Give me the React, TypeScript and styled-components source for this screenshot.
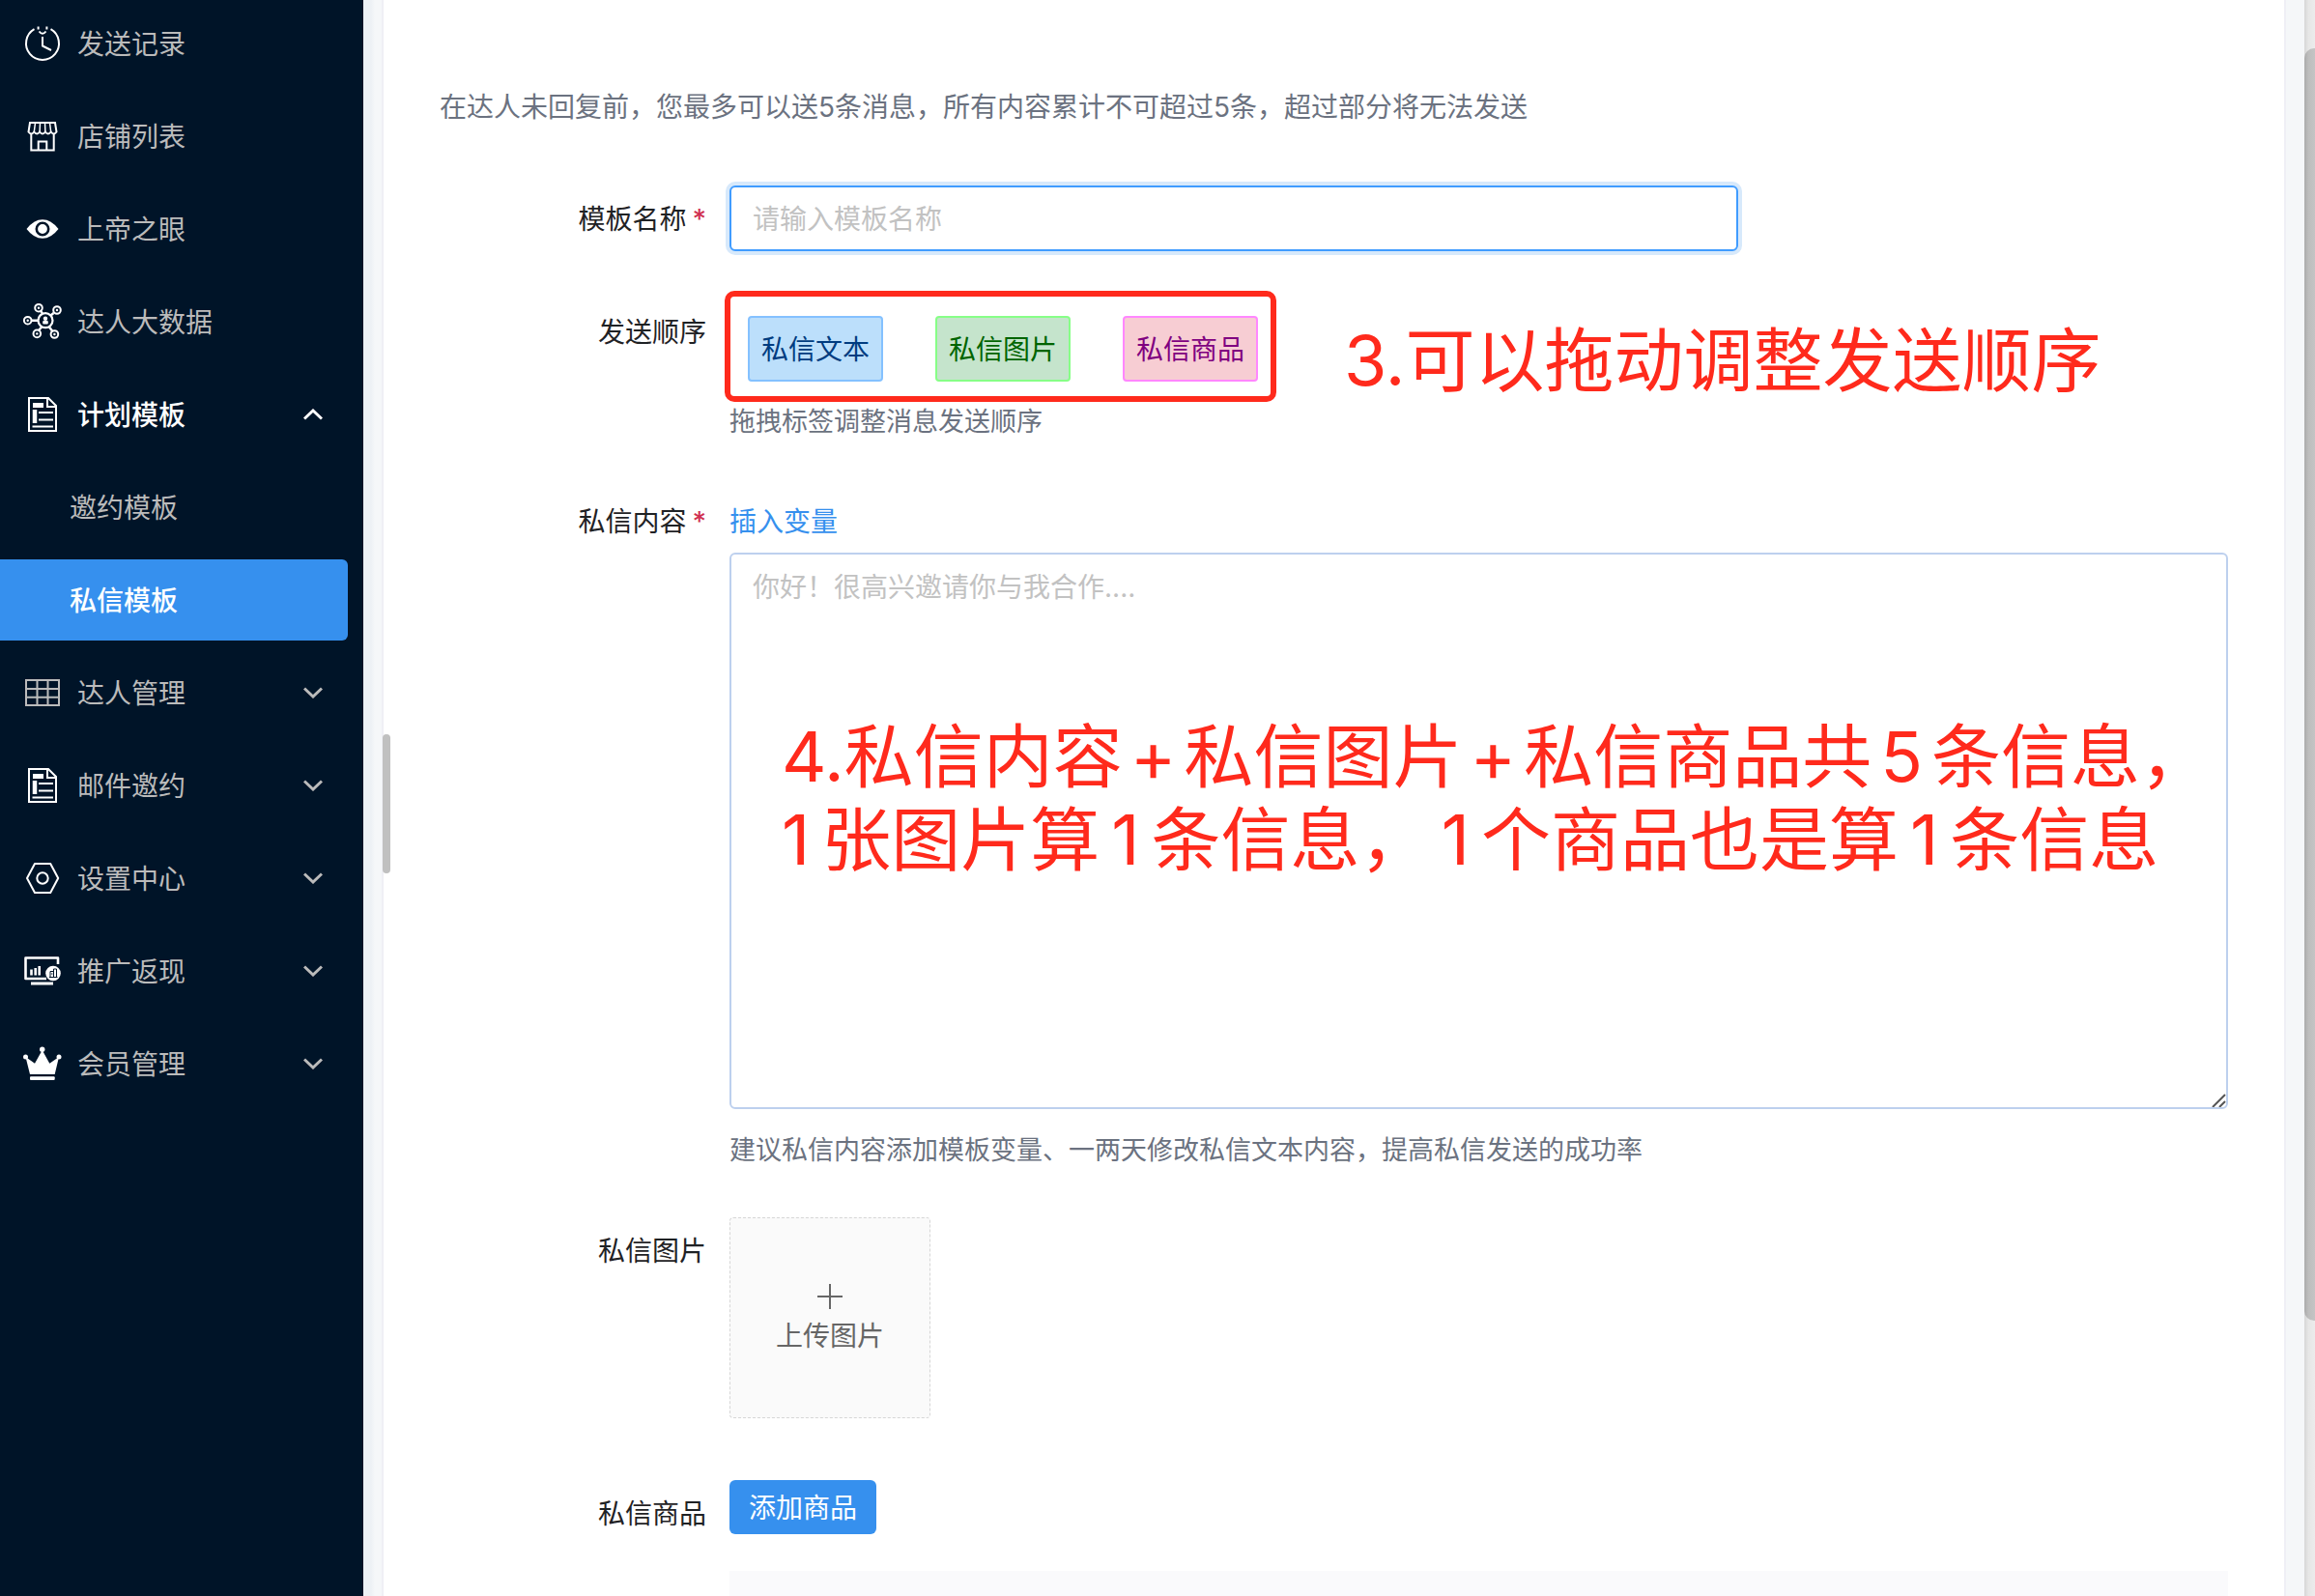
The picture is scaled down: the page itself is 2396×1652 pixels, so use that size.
import React from "react";
import styled, { createGlobalStyle } from "styled-components";

const GlobalStyle = createGlobalStyle`
  *, *::before, *::after { box-sizing: border-box; }
  body {
    margin: 0;
    background: #f5f7f9;
    font-family: Inter, "Noto Sans CJK SC", sans-serif;
    font-size: 28px;
    line-height: 44px;
    color: #1f2225;
  }
  button, input, textarea { font: inherit; }
`;

const red = "#ff2a1c";
const blue = "#3690ee";

const Page = styled.div`
  display: flex;
  height: 100vh;
  overflow: hidden;
`;

const Sidebar = styled.nav`
  flex: 0 0 376px;
  padding: 3px 16px 0 0;
  background: #001428;
`;

const Menu = styled.ul`
  display: flex;
  flex-direction: column;
  gap: 12px;
  margin: 0;
  padding: 0;
  list-style: none;
`;

type Tone = "muted" | "open" | "current";

const MenuLink = styled.a<{ $tone: Tone; $sub?: boolean }>`
  display: flex;
  align-items: center;
  gap: 16px;
  height: 84px;
  padding: 0 26px 0 ${(p) => (p.$sub ? "72px" : "24px")};
  border-radius: 0 6px 6px 0;
  background: ${(p) => (p.$tone === "current" ? blue : "transparent")};
  color: ${(p) => (p.$tone === "muted" ? "#bbbbbb" : "#ffffff")};
  font-weight: ${(p) => (p.$tone === "muted" ? 400 : 500)};
  text-decoration: none;
`;

const MenuButton = styled(MenuLink).attrs({ as: "button", type: "button" })`
  width: 100%;
  border: 0;
  text-align: left;
`;

const MenuText = styled.span`
  flex: 1;
  padding-top: 2px;
`;

const Icon = styled.svg<{ $muted?: boolean }>`
  flex: none;
  width: 40px;
  height: 40px;
  overflow: visible;
  color: ${(p) => (p.$muted ? "#bbbbbb" : "#ffffff")};
  fill: none;
  stroke: currentColor;
  stroke-width: 2;
`;

const Chevron = styled.svg`
  flex: none;
  width: 20px;
  height: 12px;
  fill: none;
  stroke: currentColor;
  stroke-width: 3;
`;

const Main = styled.main`
  position: relative;
  display: flex;
  flex: 1;
  min-width: 0;
  padding: 0 19px;
  background: linear-gradient(to right, #edf1f5 0, #edf1f5 8px, #f5f7f9 12px);
`;

const SplitHandle = styled.div`
  position: absolute;
  top: 760px;
  left: 20px;
  width: 8px;
  height: 144px;
  border-radius: 4px;
  background: #c0c0c0;
`;

const Card = styled.section`
  flex: 1;
  min-width: 0;
  padding: 89px 58px 0;
  border: solid #efeff5;
  border-width: 0 2px;
  background: #ffffff;
`;

const Intro = styled.p`
  margin: 0 0 59px;
  color: #6b7280;
`;

const Form = styled.form`
  display: flex;
  flex-direction: column;
`;

const Row = styled.div<{ $space?: number }>`
  display: grid;
  grid-template-columns: 276px minmax(0, 1fr);
  column-gap: 24px;
  margin-bottom: ${(p) => p.$space ?? 0}px;
`;

const LabelCell = styled.div<{ $top?: number }>`
  padding-top: ${(p) => p.$top ?? 0}px;
  text-align: right;
`;

const Required = styled.span`
  margin-left: 6px;
  color: #d03050;
  font-weight: 500;
`;

const NameInput = styled.input`
  display: block;
  width: 100%;
  max-width: 1044px;
  height: 68px;
  padding: 2px 22px 0;
  border: 2px solid #409cff;
  border-radius: 6px;
  outline: 0;
  background: #ffffff;
  box-shadow: 0 0 0 4px #d7e9fb;
  &::placeholder { color: #c2c2c2; opacity: 1; }
`;

const Sequence = styled.div`
  position: relative;
  display: flex;
  align-items: flex-start;
`;

const TagList = styled.div`
  position: relative;
  display: flex;
  gap: 54px;
  padding: 27px 19px 21px;
`;

const tagColors = {
  text: ["#bcdffb", "#84c1ff", "#003c80"],
  image: ["#c5e4cc", "#87ff87", "#006400"],
  goods: ["#f7cdd3", "#ff87ff", "#800080"],
};

const Tag = styled.button<{ $kind: keyof typeof tagColors }>`
  height: 68px;
  padding: 2px 12px 0;
  border: 2px solid ${(p) => tagColors[p.$kind][1]};
  border-radius: 4px;
  background: ${(p) => tagColors[p.$kind][0]};
  color: ${(p) => tagColors[p.$kind][2]};
  cursor: move;
`;

const Highlight = styled.div`
  position: absolute;
  inset: 1px 0 0 -5px;
  border: 6px solid ${red};
  border-radius: 10px;
  pointer-events: none;
`;

const Note = styled.div<{ $left: number; $top: number }>`
  position: absolute;
  left: ${(p) => p.$left}px;
  top: ${(p) => p.$top}px;
  color: ${red};
  font-size: 72px;
  line-height: 86px;
  white-space: nowrap;
  pointer-events: none;
`;

const Mark = styled.span<{ $gap: number; $first?: boolean }>`
  margin: 0 ${(p) => p.$gap}px 0 ${(p) => (p.$first ? 0 : p.$gap)}px;
`;

const Hint = styled.p<{ $top?: number }>`
  margin: ${(p) => p.$top ?? 0}px 0 0;
  color: #6b7280;
  font-size: 27px;
  line-height: 42px;
`;

const VariableLink = styled.a`
  display: block;
  width: max-content;
  color: ${blue};
  text-decoration: none;
`;

const MessageField = styled.div`
  position: relative;
  margin-top: 10px;
`;

const MessageArea = styled.textarea`
  display: block;
  width: 100%;
  height: 576px;
  padding: 12px 22px;
  border: 2px solid #bdd0ee;
  border-radius: 6px;
  outline: 0;
  background: #ffffff;
  resize: none;
  &::placeholder { color: #c2c2c2; opacity: 1; }
`;

const Grip = styled.svg`
  position: absolute;
  right: 2px;
  bottom: 2px;
  width: 15px;
  height: 14px;
  fill: none;
  stroke: #555555;
  stroke-width: 2;
  pointer-events: none;
`;

const Upload = styled.button`
  display: flex;
  flex-direction: column;
  align-items: center;
  justify-content: center;
  gap: 6px;
  width: 208px;
  height: 208px;
  padding: 6px 0 0;
  border: 1px dashed #d6d6d6;
  border-radius: 4px;
  background: #fafafa;
  color: #666666;
`;

const UploadIcon = styled.svg`
  width: 26px;
  height: 26px;
  stroke: currentColor;
  stroke-width: 2;
`;

const AddButton = styled.button`
  display: block;
  height: 56px;
  padding: 2px 20px 0;
  border: 0;
  border-radius: 6px;
  background: ${blue};
  color: #ffffff;
`;

const GoodsPanel = styled.div`
  height: 200px;
  margin-top: 38px;
  background: #fafafc;
`;

const ScrollTrack = styled.div`
  flex: 0 0 11px;
  padding-top: 50px;
  background: linear-gradient(to right, #d6d6d6, #e6e6e6 4px, #ececec);
`;

const ScrollThumb = styled.div`
  height: 1317px;
  border-radius: 10px 0 0 10px;
  background: linear-gradient(to right, #aaaaaa, #bdbdbd 4px, #c4c4c4);
`;

const documentIcon = (
  <>
    <path d="M6 3h20l8 8v26H6z" />
    <path d="M25 3v9h9" />
    <path d="M10 10.5h11" strokeWidth="5" />
    <path d="M12 15v14" strokeWidth="4.5" />
    <path d="M16 18h15M16 25.5h15M9.5 32.5h21.5" />
  </>
);

const glyphs: Record<string, React.ReactNode> = {
  clock: (
    <>
      <path d="M28.5 5.2A17 17 0 1 1 11.5 5.2" />
      <path d="M20 13v9.5l9 4.5" strokeLinejoin="round" />
      <path d="M15.6 2.5v3M24.4 2.5v3M16.5 7.5q3.5 4.5 7 0" />
    </>
  ),
  store: (
    <>
      <path d="M7 6h26l1.5 9.5q-2.7 4-5.8 0q-2.9 4-5.8 0q-2.9 4-5.8 0q-2.9 4-5.8 0q-3 4-5.8 0z" />
      <path d="M12.5 6l-1.2 9.5M17.5 6l-.4 9.5M22.5 6l.4 9.5M27.5 6l1.2 9.5" strokeWidth="1.5" />
      <path d="M8.3 17.5v17h23.4v-17" />
      <path d="M15.7 34v-8.5h8.6v8.5" />
    </>
  ),
  eye: (
    <>
      <path d="M3.5 20Q11 10.2 20 10.2T36.5 20Q29 29.8 20 29.8T3.5 20z" fill="currentColor" stroke="none" />
      <circle cx="20" cy="20" r="6.2" stroke="#001428" strokeWidth="2.6" />
    </>
  ),
  network: (
    <>
      <circle cx="23" cy="18.7" r="7.5" strokeWidth="2.2" />
      <path d="M20 11.5l-2.4-3.2M28.5 13.5l3-2.5M15.5 18.7h-6.5M19 25.5l-2.5 3M27 25.5l3 4" strokeWidth="2.4" />
      <circle cx="16" cy="5.7" r="3.8" />
      <circle cx="35" cy="8" r="3.8" />
      <circle cx="4.7" cy="18.7" r="3.8" />
      <circle cx="14.3" cy="32.4" r="3.8" />
      <circle cx="32.4" cy="33" r="3.8" />
      <g fill="currentColor" stroke="none">
        <circle cx="23" cy="16.7" r="2.2" />
        <rect x="20.2" y="19" width="5.6" height="3.4" rx="1" />
        <circle cx="16" cy="5.7" r="1.2" />
        <circle cx="35" cy="8" r="1.2" />
        <circle cx="4.7" cy="18.7" r="1.2" />
        <circle cx="14.3" cy="32.4" r="1.2" />
        <circle cx="32.4" cy="33" r="1.2" />
      </g>
    </>
  ),
  document: documentIcon,
  table: <path d="M3 7h34v26H3zM14.5 7v26M25.5 7v26M3 16h34M3 24.7h34" />,
  settings: (
    <>
      <path d="M12 5h16.2l8 15-8 15H12l-8-15z" strokeLinejoin="round" />
      <circle cx="20" cy="20" r="5.7" />
    </>
  ),
  monitor: (
    <>
      <path d="M36 13V6.5H2.5V28H24" strokeWidth="2.6" strokeLinejoin="round" />
      <path d="M8 33h23" strokeWidth="3" />
      <path d="M8.5 18.5v6M12.7 17v7.5M16.7 15v9.5" strokeWidth="2.6" />
      <circle cx="31" cy="22.5" r="7.8" fill="currentColor" stroke="none" />
      <path d="M27 26.5h8.5M28 26v-5.5h3M31.5 26v-8h3v8M29 23h1.5" stroke="#001428" strokeWidth="1" />
    </>
  ),
  crown: (
    <g fill="currentColor" stroke="none">
      <path d="M2.5 13L12 19.8 19.7 6l7.6 13.8L37 13l-4.3 18H7z" />
      <circle cx="2.5" cy="13" r="2.5" />
      <circle cx="19.7" cy="5.3" r="2.7" />
      <circle cx="37" cy="13" r="2.5" />
      <rect x="7" y="33.3" width="25.7" height="3.6" rx="1" />
    </g>
  ),
};

type Item = {
  text: string;
  icon?: string;
  mutedIcon?: boolean;
  tone?: Tone;
  expand?: "open" | "closed";
};

const items: Item[] = [
  { text: "发送记录", icon: "clock" },
  { text: "店铺列表", icon: "store" },
  { text: "上帝之眼", icon: "eye" },
  { text: "达人大数据", icon: "network" },
  { text: "计划模板", icon: "document", tone: "open", expand: "open" },
  { text: "邀约模板" },
  { text: "私信模板", tone: "current" },
  { text: "达人管理", icon: "table", mutedIcon: true, expand: "closed" },
  { text: "邮件邀约", icon: "document", expand: "closed" },
  { text: "设置中心", icon: "settings", expand: "closed" },
  { text: "推广返现", icon: "monitor", expand: "closed" },
  { text: "会员管理", icon: "crown", expand: "closed" },
];

function MenuItem({ text, icon, mutedIcon, tone = "muted", expand }: Item) {
  const content = (
    <>
      {icon && (
        <Icon viewBox="0 0 40 40" $muted={mutedIcon} aria-hidden="true">
          {glyphs[icon]}
        </Icon>
      )}
      <MenuText>{text}</MenuText>
      {expand && (
        <Chevron viewBox="0 0 20 12" aria-hidden="true">
          <path d={expand === "open" ? "M1 10.5L10 2l9 8.5" : "M1 1.5L10 10l9-8.5"} />
        </Chevron>
      )}
    </>
  );
  return (
    <li>
      {expand ? (
        <MenuButton $tone={tone} aria-expanded={expand === "open"}>{content}</MenuButton>
      ) : (
        <MenuLink href="#" $tone={tone} $sub={!icon}>{content}</MenuLink>
      )}
    </li>
  );
}

export default function App() {
  return (
    <Page>
      <GlobalStyle />
      <Sidebar>
        <Menu>
          {items.map((item) => (
            <MenuItem key={item.text} {...item} />
          ))}
        </Menu>
      </Sidebar>
      <Main>
        <Card>
          <Intro>在达人未回复前，您最多可以送5条消息，所有内容累计不可超过5条，超过部分将无法发送</Intro>
          <Form>
            <Row $space={40}>
              <LabelCell $top={13}>
                <label htmlFor="name">模板名称<Required>*</Required></label>
              </LabelCell>
              <NameInput id="name" placeholder="请输入模板名称" />
            </Row>
            <Row $space={60}>
              <LabelCell $top={22}>发送顺序</LabelCell>
              <div>
                <Sequence>
                  <TagList>
                    <Tag type="button" $kind="text">私信文本</Tag>
                    <Tag type="button" $kind="image">私信图片</Tag>
                    <Tag type="button" $kind="goods">私信商品</Tag>
                    <Highlight />
                  </TagList>
                  <Note $left={636} $top={30}>3.可以拖动调整发送顺序</Note>
                </Sequence>
                <Hint>拖拽标签调整消息发送顺序</Hint>
              </div>
            </Row>
            <Row $space={48}>
              <LabelCell>
                <label htmlFor="message">私信内容<Required>*</Required></label>
              </LabelCell>
              <div>
                <VariableLink href="#">插入变量</VariableLink>
                <MessageField>
                  <MessageArea id="message" placeholder="你好！很高兴邀请你与我合作...." />
                  <Grip viewBox="0 0 15 14" aria-hidden="true">
                    <path d="M1 14L14 1M8 14l6-6" />
                  </Grip>
                  <Note $left={54} $top={168}>
                    4.私信内容<Mark $gap={8}>+</Mark>私信图片<Mark $gap={8}>+</Mark>私信商品共<Mark $gap={9}>5</Mark>条信息，
                    <br />
                    <Mark $gap={12} $first>1</Mark>张图片算<Mark $gap={12}>1</Mark>条信息，<Mark $gap={12}>1</Mark>个商品也是算<Mark $gap={12}>1</Mark>条信息
                  </Note>
                </MessageField>
                <Hint $top={22}>建议私信内容添加模板变量、一两天修改私信文本内容，提高私信发送的成功率</Hint>
              </div>
            </Row>
            <Row $space={64}>
              <LabelCell $top={13}>私信图片</LabelCell>
              <Upload type="button">
                <UploadIcon viewBox="0 0 26 26" aria-hidden="true">
                  <path d="M13 0v26M0 13h26" />
                </UploadIcon>
                上传图片
              </Upload>
            </Row>
            <Row>
              <LabelCell $top={13}>私信商品</LabelCell>
              <div>
                <AddButton type="button">添加商品</AddButton>
                <GoodsPanel />
              </div>
            </Row>
          </Form>
        </Card>
        <SplitHandle />
      </Main>
      <ScrollTrack>
        <ScrollThumb />
      </ScrollTrack>
    </Page>
  );
}
